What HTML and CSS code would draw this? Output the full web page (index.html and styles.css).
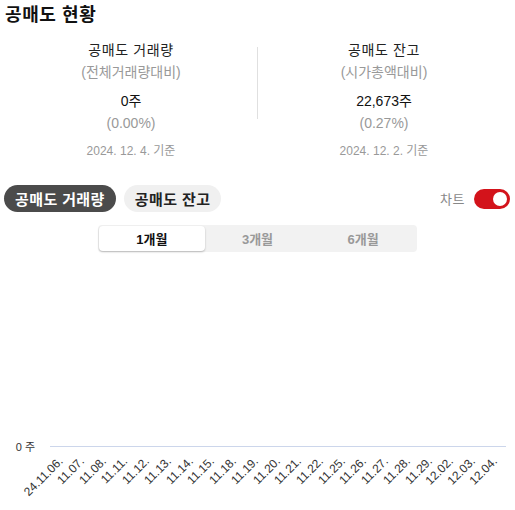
FILE: index.html
```html
<!DOCTYPE html>
<html lang="ko">
<head>
<meta charset="utf-8">
<link rel="stylesheet" href="styles.css">
</head>
<body>
<div class="page">
  <h1 class="title">공매도 현황</h1>
  <div class="summary">
    <div class="col">
      <div class="name">공매도 거래량</div>
      <div class="sub">(전체거래량대비)</div>
      <div class="value">0주</div>
      <div class="pct">(0.00%)</div>
      <div class="date">2024. 12. 4. 기준</div>
    </div>
    <div class="divider"></div>
    <div class="col">
      <div class="name">공매도 잔고</div>
      <div class="sub">(시가총액대비)</div>
      <div class="value">22,673주</div>
      <div class="pct">(0.27%)</div>
      <div class="date">2024. 12. 2. 기준</div>
    </div>
  </div>
  <div class="controls">
    <div class="pills">
      <button class="pill pill-active">공매도 거래량</button>
      <button class="pill">공매도 잔고</button>
    </div>
    <div class="toggle-wrap">
      <span class="toggle-label">차트</span>
      <span class="toggle"><span class="knob"></span></span>
    </div>
  </div>
  <div class="segments">
    <div class="seg seg-active">1개월</div>
    <div class="seg">3개월</div>
    <div class="seg">6개월</div>
  </div>
  <div class="chart">
    <div class="yaxis"><span class="ylabel">0 주</span></div>
    <div class="plot"></div>
    <div class="corner"></div>
    <div class="xaxis">
      <div class="tick"><span>24.11.06.</span></div>
      <div class="tick"><span>11.07.</span></div>
      <div class="tick"><span>11.08.</span></div>
      <div class="tick"><span>11.11.</span></div>
      <div class="tick"><span>11.12.</span></div>
      <div class="tick"><span>11.13.</span></div>
      <div class="tick"><span>11.14.</span></div>
      <div class="tick"><span>11.15.</span></div>
      <div class="tick"><span>11.18.</span></div>
      <div class="tick"><span>11.19.</span></div>
      <div class="tick"><span>11.20.</span></div>
      <div class="tick"><span>11.21.</span></div>
      <div class="tick"><span>11.22.</span></div>
      <div class="tick"><span>11.25.</span></div>
      <div class="tick"><span>11.26.</span></div>
      <div class="tick"><span>11.27.</span></div>
      <div class="tick"><span>11.28.</span></div>
      <div class="tick"><span>11.29.</span></div>
      <div class="tick"><span>12.02.</span></div>
      <div class="tick"><span>12.03.</span></div>
      <div class="tick"><span>12.04.</span></div>
    </div>
  </div>
</div>
</body>
</html>
```
FILE: styles.css
```css
* { box-sizing: border-box; }
html, body {
  margin: 0;
  padding: 0;
  background: #fff;
}
body {
  font-family: "Liberation Sans", "Noto Sans CJK KR", sans-serif;
  color: #222;
  overflow: hidden;
}
.page {
  padding: 0 5px;
  width: 515px;
  height: 510px;
}
.title {
  margin: 0;
  font-size: 18px;
  font-weight: 700;
  letter-spacing: 0.6px;
  line-height: 30px;
  color: #111;
}
.summary {
  display: flex;
  margin-top: 9px;
}
.col {
  flex: 1;
  text-align: center;
}
.divider {
  width: 1px;
  height: 72px;
  margin-top: 8px;
  background: #e0e0e0;
}
.name {
  font-size: 14px;
  letter-spacing: 0.6px;
  line-height: 22px;
  color: #222;
}
.sub {
  font-size: 14px;
  line-height: 22px;
  color: #999;
}
.value {
  font-size: 14px;
  line-height: 22px;
  margin-top: 7px;
  color: #111;
}
.pct {
  font-size: 14px;
  line-height: 22px;
  color: #999;
}
.date {
  font-size: 12px;
  line-height: 18px;
  margin-top: 8px;
  color: #999;
}
.controls {
  display: flex;
  align-items: center;
  justify-content: space-between;
  margin-top: 25px;
}
.pills {
  display: flex;
  gap: 8px;
  margin-left: -1px;
}
.pill {
  font-family: inherit;
  border: 0;
  height: 27px;
  padding: 0 11px;
  border-radius: 14px;
  font-size: 15px;
  font-weight: 700;
  letter-spacing: 0.4px;
  background: #f0f0f0;
  color: #222;
}
.pill-active {
  background: #4b4b4b;
  color: #fff;
}
.toggle-wrap {
  display: flex;
  align-items: center;
  gap: 9px;
}
.toggle-label {
  font-size: 13px;
  letter-spacing: 0.5px;
  color: #888;
}
.toggle {
  display: flex;
  justify-content: flex-end;
  align-items: center;
  width: 36px;
  height: 20px;
  padding: 3px;
  border-radius: 10px;
  background: #d3131b;
}
.knob {
  width: 14px;
  height: 14px;
  border-radius: 50%;
  background: #fff;
}
.segments {
  display: flex;
  width: 319px;
  height: 27px;
  margin: 13px auto 0;
  padding: 1px;
  border-radius: 4px;
  background: #f2f2f2;
}
.seg {
  flex: 1;
  display: flex;
  align-items: center;
  justify-content: center;
  font-size: 13px;
  font-weight: 700;
  color: #999;
  border-radius: 4px;
}
.seg-active {
  background: #fff;
  color: #111;
  box-shadow: 0 1px 2px rgba(0, 0, 0, 0.25);
}
.chart {
  display: grid;
  grid-template-columns: 45px 1fr;
  grid-template-rows: 195px 63px;
  margin-right: 4px;
}
.yaxis {
  display: flex;
  align-items: flex-end;
  justify-content: flex-end;
  padding-right: 15px;
}
.ylabel {
  font-size: 11px;
  line-height: 14px;
  margin-bottom: -7px;
  color: #333;
}
.plot {
  border-bottom: 1px solid #ccd6eb;
}
.xaxis {
  display: flex;
}
.tick {
  flex: 1;
  position: relative;
}
.tick span {
  position: absolute;
  right: 50%;
  top: 6px;
  font-size: 12px;
  line-height: 13px;
  white-space: nowrap;
  color: #333;
  transform-origin: 100% 50%;
  transform: rotate(-45deg);
}
```
